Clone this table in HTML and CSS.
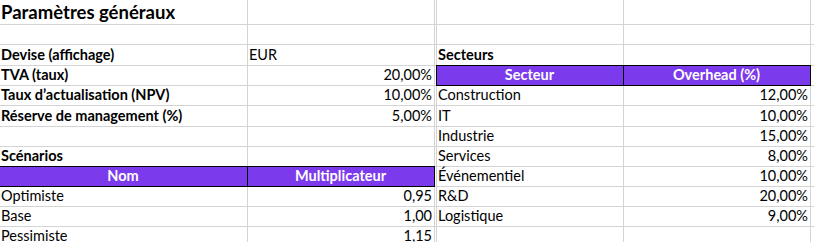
FILE: index.html
```html
<!DOCTYPE html>
<html lang="fr">
<head>
<meta charset="utf-8">
<title>Paramètres généraux</title>
<link rel="stylesheet" href="styles.css">
</head>
<body>
<div class="sheet">
  <!-- row 1 -->
  <div class="cell r1 title">Paramètres généraux</div>
  <div class="cell r1"></div>
  <div class="cell r1 gap"></div>
  <div class="cell r1"></div>
  <div class="cell r1"></div>
  <div class="cell r1 last"></div>
  <!-- row 2 -->
  <div class="cell r20"></div>
  <div class="cell r20"></div>
  <div class="cell r20 gap"></div>
  <div class="cell r20"></div>
  <div class="cell r20"></div>
  <div class="cell r20 last"></div>
  <!-- row 3 -->
  <div class="cell r21 bold">Devise (affichage)</div>
  <div class="cell r21">EUR</div>
  <div class="cell r21 gap"></div>
  <div class="cell r21 bold">Secteurs</div>
  <div class="cell r21"></div>
  <div class="cell r21 last"></div>
  <!-- row 4 -->
  <div class="cell r20 bold">TVA (taux)</div>
  <div class="cell r20 num">20,00%</div>
  <div class="cell r20 gap"></div>
  <div class="cell r20 head">Secteur</div>
  <div class="cell r20 head">Overhead (%)</div>
  <div class="cell r20 last"></div>
  <!-- row 5 -->
  <div class="cell r20 bold">Taux d’actualisation (NPV)</div>
  <div class="cell r20 num">10,00%</div>
  <div class="cell r20 gap"></div>
  <div class="cell r20">Construction</div>
  <div class="cell r20 num">12,00%</div>
  <div class="cell r20 last"></div>
  <!-- row 6 -->
  <div class="cell r21 bold">Réserve de management (%)</div>
  <div class="cell r21 num">5,00%</div>
  <div class="cell r21 gap"></div>
  <div class="cell r21">IT</div>
  <div class="cell r21 num">10,00%</div>
  <div class="cell r21 last"></div>
  <!-- row 7 -->
  <div class="cell r20"></div>
  <div class="cell r20"></div>
  <div class="cell r20 gap"></div>
  <div class="cell r20">Industrie</div>
  <div class="cell r20 num">15,00%</div>
  <div class="cell r20 last"></div>
  <!-- row 8 -->
  <div class="cell r20 bold">Scénarios</div>
  <div class="cell r20"></div>
  <div class="cell r20 gap"></div>
  <div class="cell r20">Services</div>
  <div class="cell r20 num">8,00%</div>
  <div class="cell r20 last"></div>
  <!-- row 9 -->
  <div class="cell r20 head">Nom</div>
  <div class="cell r20 head">Multiplicateur</div>
  <div class="cell r20 gap"></div>
  <div class="cell r20">Événementiel</div>
  <div class="cell r20 num">10,00%</div>
  <div class="cell r20 last"></div>
  <!-- row 10 -->
  <div class="cell r20">Optimiste</div>
  <div class="cell r20 num">0,95</div>
  <div class="cell r20 gap"></div>
  <div class="cell r20">R&amp;D</div>
  <div class="cell r20 num">20,00%</div>
  <div class="cell r20 last"></div>
  <!-- row 11 -->
  <div class="cell r20">Base</div>
  <div class="cell r20 num">1,00</div>
  <div class="cell r20 gap"></div>
  <div class="cell r20">Logistique</div>
  <div class="cell r20 num">9,00%</div>
  <div class="cell r20 last"></div>
  <!-- row 12 -->
  <div class="cell r20">Pessimiste</div>
  <div class="cell r20 num">1,15</div>
  <div class="cell r20 gap"></div>
  <div class="cell r20"></div>
  <div class="cell r20"></div>
  <div class="cell r20 last"></div>
</div>
</body>
</html>
```

FILE: styles.css
```css
html, body {
  margin: 0;
  padding: 0;
  background: #ffffff;
}

body {
  font-family: Lato, "Open Sans", "Liberation Sans", sans-serif;
  font-size: 14.5px;
  color: #000000;
  overflow: hidden;
}

/* worksheet grid: A, B, hidden column, C, D, E */
.sheet {
  display: grid;
  grid-template-columns: 248px 187px 2px 187px 187px 1fr;
  width: 814px;
}

.cell {
  box-sizing: border-box;
  border-right: 1px solid #d4d4d4;
  border-bottom: 1px solid #d4d4d4;
  display: flex;
  align-items: flex-end;
  padding: 0 2px 2px 1px;
  white-space: nowrap;
  overflow: visible;
  line-height: 16px;
}

.r1 { height: 25px; }
.r20 { height: 20px; }
.r21 { height: 21px; }

.gap { padding: 0; }
.last { border-right: none; }

.title {
  font-weight: 700;
  font-size: 18.5px;
  line-height: 20px;
  padding-bottom: 2px;
}

.bold { font-weight: 700; }

.num { justify-content: flex-end; }

/* table header cells in purple with black outline */
.head {
  background: #7c3aed;
  color: #ffffff;
  font-weight: 700;
  justify-content: center;
  border-right-color: #000000;
  border-bottom-color: #000000;
  box-shadow: 0 -1px 0 #000000, -1px 0 0 #000000, -1px -1px 0 #000000;
}
```
